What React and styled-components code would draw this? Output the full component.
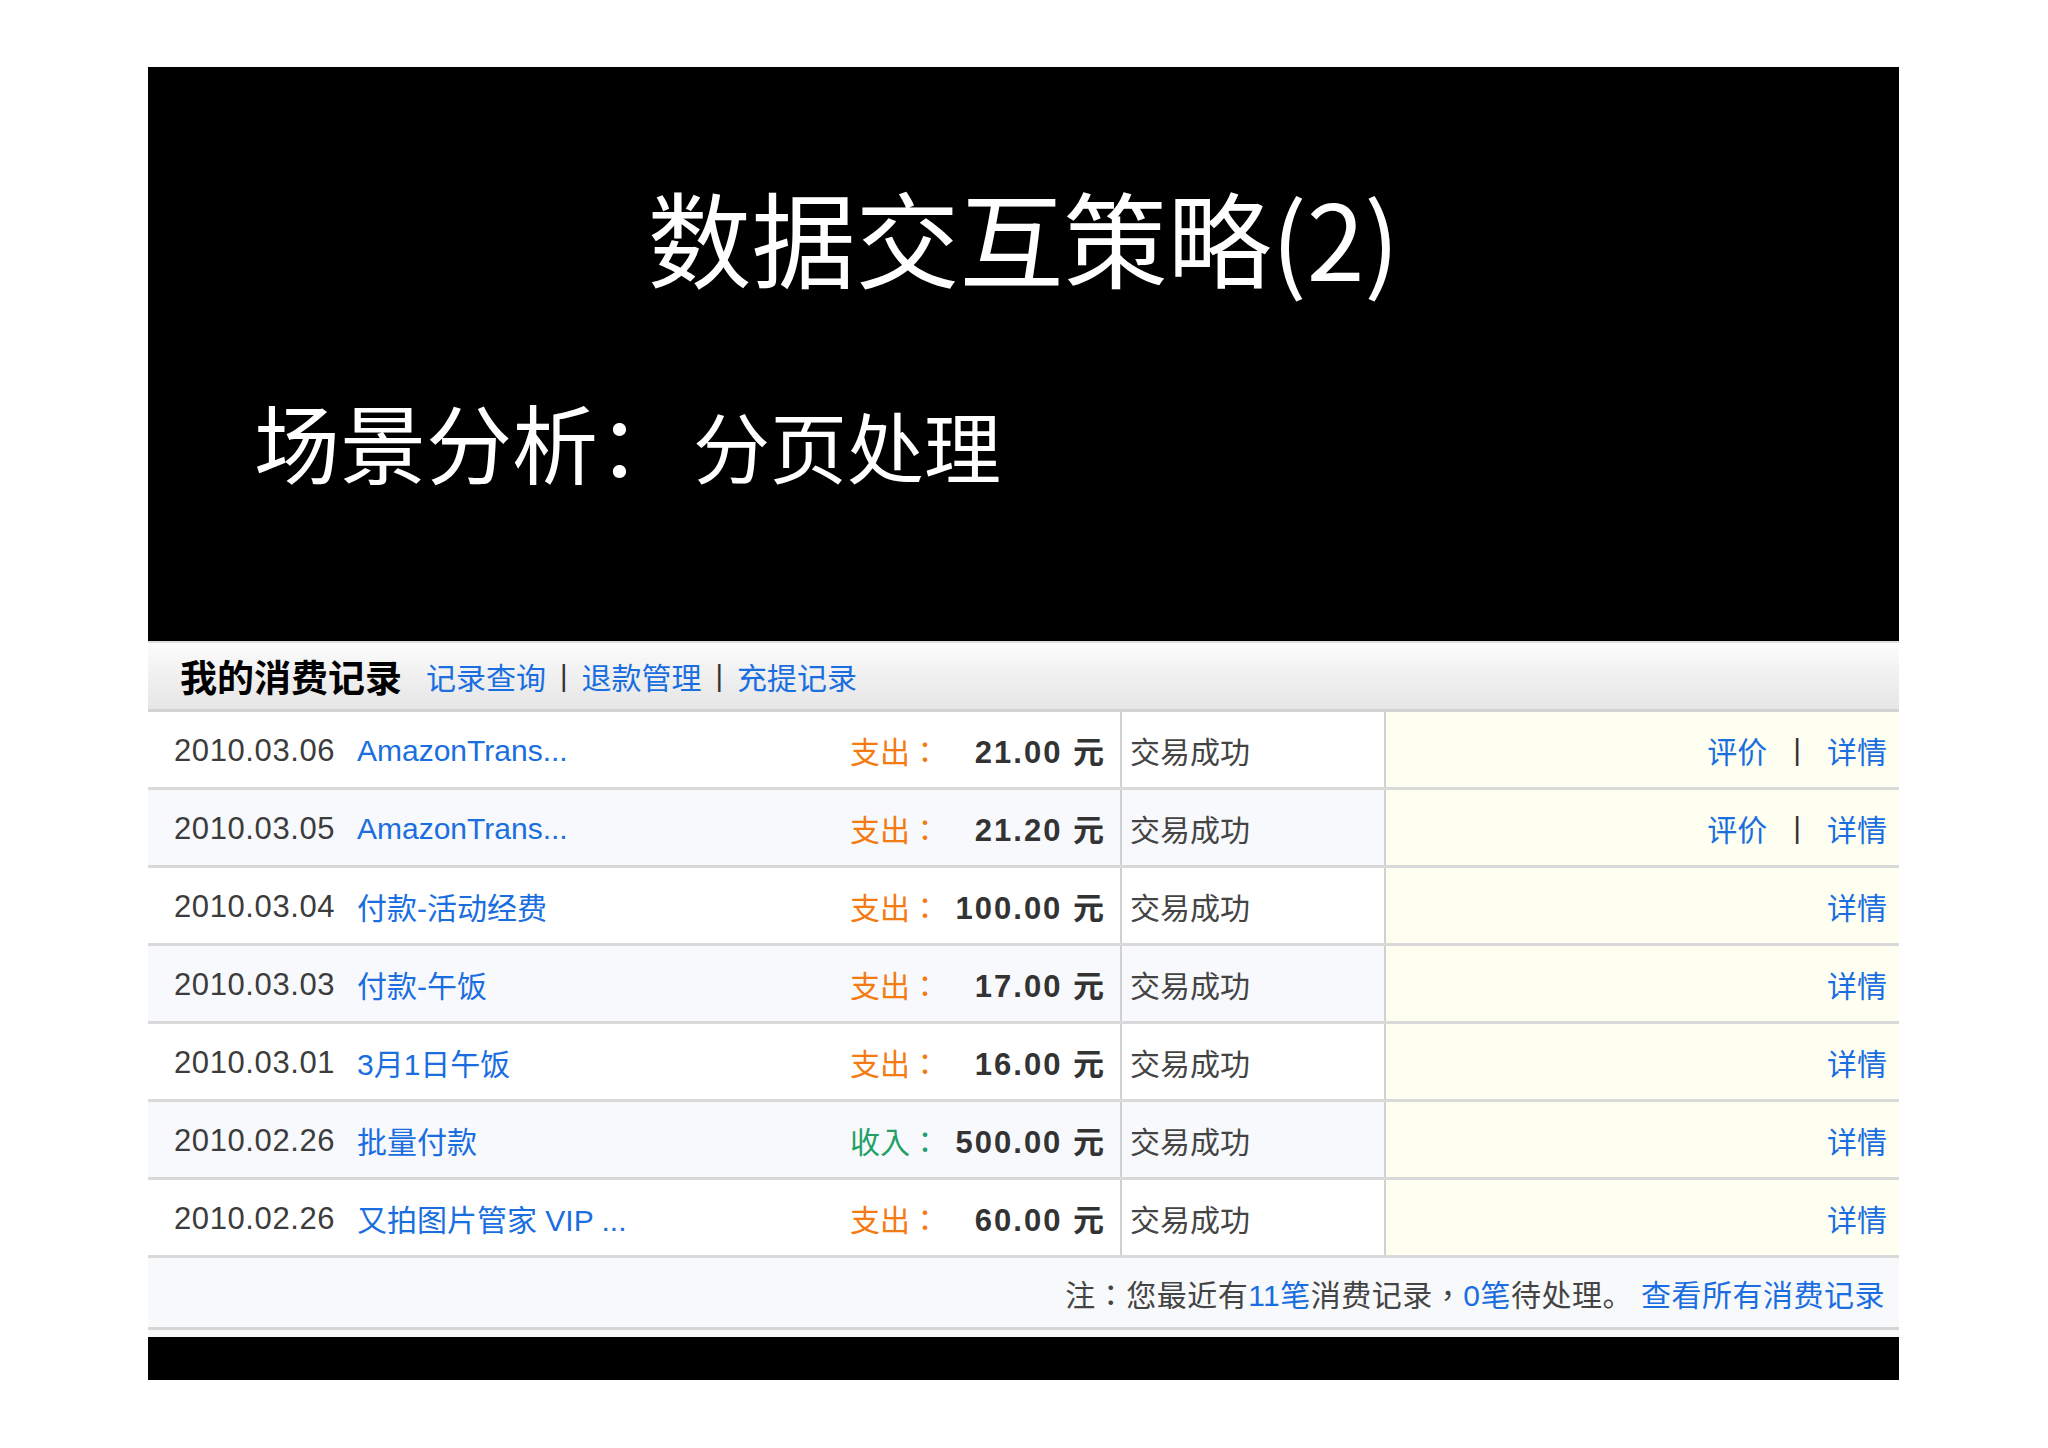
import React from 'react';
import styled, { createGlobalStyle } from 'styled-components';

const GlobalStyle = createGlobalStyle`
  html, body { margin: 0; padding: 0; background: #fff; }
  body { font-family: "Liberation Sans", "Noto Sans CJK SC", sans-serif; }
`;

const BLUE = '#1a6ee0';

const Page = styled.div`
  width: 2048px;
  height: 1448px;
  box-sizing: border-box;
  padding: 67px 149px 0 148px;
`;

const Slide = styled.section`
  width: 1751px;
  height: 1313px;
  background: #000;
  display: flex;
  flex-direction: column;
`;

const Hero = styled.div`
  height: 574px;
  flex: none;
  box-sizing: border-box;
  padding-top: 106px;
  display: flex;
  flex-direction: column;
`;

const Title = styled.h1`
  margin: 0;
  font-family: "Noto Sans CJK SC", sans-serif;
  font-weight: 400;
  font-size: 104px;
  line-height: 125px;
  color: #fff;
  text-align: center;
`;

const Subtitle = styled.h2`
  margin: 93px 0 0;
  padding-left: 106px;
  font-family: "Noto Sans CJK SC", sans-serif;
  font-weight: 400;
  line-height: 100px;
  color: #fff;
  white-space: pre;
  display: flex;
  align-items: baseline;
`;

const SubPart = styled.span`
  font-size: ${p => p.$size}px;
  margin-left: ${p => p.$gap || 0}px;
`;

const Panel = styled.div`
  flex: none;
  display: flex;
  flex-direction: column;
  background: #fafafa;
  padding-bottom: 7px;
`;

const HeaderBar = styled.div`
  height: 71px;
  box-sizing: border-box;
  border-top: 2px solid #dedede;
  border-bottom: 3px solid #d2d2d2;
  background: linear-gradient(#fdfdfd, #f1f1f1 45%, #e6e6e6);
  display: flex;
  align-items: center;
  padding-left: 32px;
`;

const HeaderTitle = styled.span`
  font-family: "Noto Sans CJK SC", sans-serif;
  font-weight: 700;
  font-size: 37px;
  color: #000;
  margin-right: 24px;
`;

const Link = styled.a`
  color: ${BLUE};
  text-decoration: none;
  font-size: ${p => p.$size || 30}px;
  white-space: nowrap;
`;

const Sep = styled.span`
  color: #333;
  font-size: ${p => p.$size || 30}px;
  margin: 0 ${p => p.$gap || 11}px;
`;

const Row = styled.div`
  height: 78px;
  box-sizing: border-box;
  border-bottom: 3px solid #d9d9d9;
  background: ${p => (p.$alt ? '#f8f9fc' : '#fff')};
  display: grid;
  grid-template-columns: 972px 264px 1fr;
`;

const MainCell = styled.div`
  display: flex;
  align-items: center;
  padding: 0 14px 0 26px;
  font-size: 30px;
`;

const DateText = styled.span`
  flex: none;
  width: 183px;
  color: #3c3c3c;
  font-size: 31px;
  letter-spacing: 0.6px;
  padding-top: 3px;
`;

const Name = styled(Link)`
  flex: 1;
  padding-top: ${p => (p.$latin ? 3 : 0)}px;
`;

const TypeLabel = styled.span`
  flex: none;
  width: 90px;
  font-family: "Noto Sans CJK TC", sans-serif;
  color: ${p => (p.$income ? '#22a068' : '#f47a12')};
`;

const Amount = styled.span`
  flex: none;
  width: 166px;
  text-align: right;
  font-weight: 700;
  font-size: 31px;
  letter-spacing: 2px;
  color: #333;
`;

const StatusCell = styled.div`
  border-left: 2px solid #d0d0d0;
  padding-left: 8px;
  display: flex;
  align-items: center;
  font-family: "Noto Sans CJK SC", sans-serif;
  font-size: 30px;
  color: #444;
`;

const ActionCell = styled.div`
  border-left: 2px solid #d0d0d0;
  background: #fefff0;
  display: flex;
  align-items: center;
  justify-content: flex-end;
  padding-right: 12px;
`;

const Footer = styled.div`
  height: 72px;
  box-sizing: border-box;
  border-bottom: 3px solid #d6d6d6;
  background: #f8f9fb;
  display: flex;
  align-items: center;
  justify-content: flex-end;
  padding-right: 14px;
  font-size: 30px;
  letter-spacing: 0.5px;
  color: #444;
  white-space: pre;
`;

const Punct = styled.span`
  font-family: "Noto Sans CJK TC", sans-serif;
`;

const Num = styled.span`
  color: ${BLUE};
`;

const FooterLink = styled(Link)`
  margin-left: 8px;
`;

const records = [
  { date: '2010.03.06', name: 'AmazonTrans...', latin: true, income: false, amount: '21.00', rate: true },
  { date: '2010.03.05', name: 'AmazonTrans...', latin: true, income: false, amount: '21.20', rate: true },
  { date: '2010.03.04', name: '付款-活动经费', income: false, amount: '100.00' },
  { date: '2010.03.03', name: '付款-午饭', income: false, amount: '17.00' },
  { date: '2010.03.01', name: '3月1日午饭', income: false, amount: '16.00' },
  { date: '2010.02.26', name: '批量付款', income: true, amount: '500.00' },
  { date: '2010.02.26', name: '又拍图片管家 VIP ...', income: false, amount: '60.00' },
];

export default function App() {
  return (
    <>
      <GlobalStyle />
      <Page>
        <Slide>
          <Hero>
            <Title>数据交互策略(2)</Title>
            <Subtitle>
              <SubPart $size={86}>场景分析：</SubPart>
              <SubPart $size={77} $gap={9}>分页处理</SubPart>
            </Subtitle>
          </Hero>
          <Panel>
            <HeaderBar>
              <HeaderTitle>我的消费记录</HeaderTitle>
              <Link $size={30}>记录查询</Link>
              <Sep $size={29} $gap={14}>|</Sep>
              <Link $size={30}>退款管理</Link>
              <Sep $size={29} $gap={14}>|</Sep>
              <Link $size={30}>充提记录</Link>
            </HeaderBar>
            {records.map((r, i) => (
              <Row key={i} $alt={i % 2 === 1}>
                <MainCell>
                  <DateText>{r.date}</DateText>
                  <Name $latin={r.latin}>{r.name}</Name>
                  <TypeLabel $income={r.income}>{r.income ? '收入：' : '支出：'}</TypeLabel>
                  <Amount>{r.amount} 元</Amount>
                </MainCell>
                <StatusCell>交易成功</StatusCell>
                <ActionCell>
                  {r.rate && (
                    <>
                      <Link>评价</Link>
                      <Sep $gap={26}>|</Sep>
                    </>
                  )}
                  <Link>详情</Link>
                </ActionCell>
              </Row>
            ))}
            <Footer>
              注<Punct>：</Punct>您最近有<Num>11笔</Num>消费记录<Punct>，</Punct><Num>0笔</Num>待处理。
              <FooterLink>查看所有消费记录</FooterLink>
            </Footer>
          </Panel>
        </Slide>
      </Page>
    </>
  );
}
